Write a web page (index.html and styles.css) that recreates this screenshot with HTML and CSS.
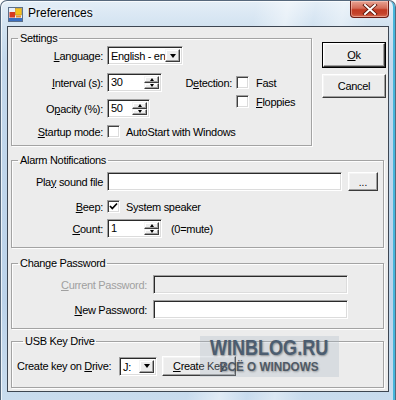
FILE: index.html
```html
<!DOCTYPE html>
<html>
<head>
<meta charset="utf-8">
<title>Preferences</title>
<link rel="stylesheet" href="styles.css">
</head>
<body>
<div class="window">
  <div class="titlebar">
    <svg class="appicon" width="15" height="15" viewBox="0 0 15 15">
      <rect x="0.5" y="0.5" width="14" height="14" fill="#e8eef6" stroke="#5b6f8a"/>
      <rect x="1" y="11" width="13" height="3" fill="#3b6fc0"/>
      <rect x="1.5" y="5" width="5.5" height="5.5" fill="#d63a20"/>
      <rect x="7.5" y="1.5" width="6" height="6.5" fill="#f3c21c" stroke="#c08a10" stroke-width="0.6"/>
      <rect x="8" y="8.5" width="5" height="2" fill="#e8902c"/>
    </svg>
    <span class="title">Preferences</span>
    <div class="close">
      <svg width="16" height="11" viewBox="0 0 16 11">
        <path d="M3 1 L13 10 M13 1 L3 10" fill="none" stroke="#5a1408" stroke-width="3.6" stroke-linecap="square"/>
        <path d="M3 1 L13 10 M13 1 L3 10" fill="none" stroke="#ffffff" stroke-width="2" stroke-linecap="square"/>
      </svg>
    </div>
  </div>

  <div class="client">
    <div class="toprow">
      <fieldset class="group g-settings">
        <legend>Settings</legend>
        <div class="row r-lang">
          <span class="lbl"><u>L</u>anguage:</span>
          <div class="box combo c-lang"><span class="val">English - en</span><span class="drop"><i class="tri"></i></span></div>
        </div>
        <div class="row r-int">
          <span class="lbl"><u>I</u>nterval (s):</span>
          <div class="box spin s-int"><span class="val">30</span><span class="arrows"><span class="sb"><i class="tu"></i></span><span class="sb"><i class="td"></i></span></span></div>
          <span class="det-lbl">D<u>e</u>tection:</span>
          <div class="det">
            <div class="chk-row"><span class="chk"></span><span>Fast</span></div>
            <div class="chk-row"><span class="chk"></span><span><u>F</u>loppies</span></div>
          </div>
        </div>
        <div class="row r-op">
          <span class="lbl">O<u>p</u>acity (%):</span>
          <div class="box spin s-op"><span class="val">50</span><span class="arrows"><span class="sb"><i class="tu"></i></span><span class="sb"><i class="td"></i></span></span></div>
        </div>
        <div class="row r-start">
          <span class="lbl"><u>S</u>tartup mode:</span>
          <div class="chk-row"><span class="chk"></span><span>AutoStart with Windows</span></div>
        </div>
      </fieldset>
      <div class="buttons">
        <div class="btn-default"><div class="btn b-ok"><u>O</u>k</div></div>
        <div class="btn b-cancel">Cancel</div>
      </div>
    </div>

    <fieldset class="group g-alarm">
      <legend>Alarm Notifications</legend>
      <div class="row r-sound">
        <span class="lbl">Pla<u>y</u> sound file</span>
        <div class="box tb tb-sound"></div>
        <div class="btn b-browse">...</div>
      </div>
      <div class="row r-beep">
        <span class="lbl"><u>B</u>eep:</span>
        <div class="chk-row"><span class="chk checked"><svg width="9" height="9" viewBox="0 0 9 9"><path d="M1 4 L3.3 6.5 L8 1.5" fill="none" stroke="#000" stroke-width="1.7"/></svg></span><span>System speaker</span></div>
      </div>
      <div class="row r-count">
        <span class="lbl"><u>C</u>ount:</span>
        <div class="box spin s-count"><span class="val">1</span><span class="arrows"><span class="sb"><i class="tu"></i></span><span class="sb"><i class="td"></i></span></span></div>
        <span class="note">(0=mute)</span>
      </div>
    </fieldset>

    <fieldset class="group g-pass">
      <legend>Change Password</legend>
      <div class="row r-cur">
        <span class="lbl2 disabled"><u>C</u>urrent Password:</span>
        <div class="box tb tb-pass tb-disabled"></div>
      </div>
      <div class="row r-new">
        <span class="lbl2"><u>N</u>ew Password:</span>
        <div class="box tb tb-pass"></div>
      </div>
    </fieldset>

    <fieldset class="group g-usb">
      <legend>USB Key Drive</legend>
      <div class="row r-usb">
        <span class="lbl3">Create key on <u>D</u>rive:</span>
        <div class="box combo c-drive"><span class="val">J:</span><span class="drop"><i class="tri"></i></span></div>
        <div class="btn b-create"><u>C</u>reate Key</div>
      </div>
    </fieldset>
  </div>

  <div class="watermark">
    <div class="wm1">WINBLOG.RU</div>
    <div class="wm2">ВСЁ О WINDOWS</div>
  </div>
</div>
</body>
</html>
```

FILE: styles.css
```css
* { box-sizing: border-box; }
html, body { margin: 0; padding: 0; }
body {
  width: 396px;
  height: 400px;
  overflow: hidden;
  background: #ffffff;
  font-family: "Liberation Sans", Arial, sans-serif;
  font-size: 11px;
  color: #000;
}
u { text-decoration: underline; text-underline-offset: 1px; }

.window {
  position: relative;
  width: 396px;
  height: 400px;
  border: 1px solid #56687c;
  border-bottom: none;
  border-radius: 7px 7px 0 0;
  padding: 0 6px 8px 6px;
  display: flex;
  flex-direction: column;
  background:
    linear-gradient(100deg, rgba(255,255,255,0) 55%, rgba(255,255,255,0.45) 62%, rgba(255,255,255,0) 68%, rgba(255,255,255,0.35) 74%, rgba(255,255,255,0) 80%),
    linear-gradient(180deg, #e4eef7 0px, #d3e3f1 24px, #c3d8ec 60px, #bcd3ea 300px, #c9dcee 400px);
  box-shadow: inset -4px 0 0 -2px #46b6dc, inset 1px 1px 0 rgba(255,255,255,0.7);
}

.titlebar {
  height: 25px;
  display: flex;
  align-items: flex-start;
  flex: none;
}
.appicon { margin: 6px 0 0 1px; flex: none; }
.title {
  margin: 5px 0 0 5px;
  font-size: 12px;
  line-height: 15px;
  color: #000;
  text-shadow: 0 0 4px rgba(255,255,255,0.95), 0 0 8px rgba(255,255,255,0.8);
}
.close {
  margin-left: auto;
  width: 39px;
  height: 17px;
  border: 1px solid #6b1c14;
  border-top: none;
  border-radius: 0 0 4px 4px;
  background: linear-gradient(180deg, #e8a494 0%, #d46c58 45%, #c23a22 55%, #c4442c 80%, #d66a50 100%);
  box-shadow: inset 0 0 0 1px rgba(255,220,210,0.45);
  display: flex;
  align-items: center;
  justify-content: center;
}

.client {
  flex: 1;
  background: #ececec;
  border: 1px solid #3d4652;
  padding: 5px 0 0 3px;
  display: flex;
  flex-direction: column;
  letter-spacing: -0.3px;
}

.toprow { display: flex; align-items: flex-start; }

.group {
  margin: 0;
  padding: 0;
  min-width: 0;
  border: 1px solid #a3a3a3;
  box-shadow: inset 1px 1px 0 #fdfdfd, 1px 1px 0 #fdfdfd;
}
.group legend {
  margin-left: 6px;
  padding: 0 2px;
  line-height: 13px;
  font-size: 11px;
}

.g-settings { width: 301px; padding-bottom: 7px; }
.g-alarm { width: 373px; margin-top: 8px; padding-bottom: 9px; }
.g-pass { width: 373px; margin-top: 9px; padding-bottom: 9px; }
.g-usb { width: 373px; margin-top: 6px; padding-bottom: 11px; padding-left: 5px; }

.row { display: flex; align-items: center; }
.lbl { width: 91px; margin-right: 4px; text-align: right; flex: none; white-space: nowrap; }
.lbl2 { width: 135px; margin-right: 6px; text-align: right; flex: none; white-space: nowrap; }
.lbl3 { width: 102px; flex: none; white-space: nowrap; }
.disabled { color: #a0a0a0; }

.r-lang { margin-top: 1px; height: 19px; }
.r-int { margin-top: 8px; height: 19px; }
.r-op { margin-top: 7px; height: 19px; }
.r-start { margin-top: 7px; height: 13px; }

.r-sound { margin-top: 5px; height: 19px; }
.r-beep { margin-top: 9px; height: 13px; }
.r-count { margin-top: 6px; height: 19px; }

.r-cur { margin-top: 5px; height: 19px; }
.r-new { margin-top: 6px; height: 19px; }

.r-usb { margin-top: 8px; height: 20px; }

/* sunken boxes */
.box {
  height: 19px;
  background: #fff;
  border: 1px solid;
  border-color: #a0a0a0 #ffffff #ffffff #a0a0a0;
  box-shadow: inset 1px 1px 0 #2a2a2a, inset -1px -1px 0 #dcdcdc;
  flex: none;
  display: flex;
  align-items: stretch;
}
.val { flex: 1; padding: 0 0 0 3px; line-height: 17px; white-space: nowrap; overflow: hidden; }

.combo .val { padding-top: 1px; }
.drop, .sb {
  background: #ececec;
  border: 1px solid;
  border-color: #f4f4f4 #3a3a3a #3a3a3a #f4f4f4;
  box-shadow: inset -1px -1px 0 #a0a0a0, inset 1px 1px 0 #ffffff;
  display: flex;
  align-items: center;
  justify-content: center;
}
.drop { width: 15px; margin: 2px 2px 2px 0; flex: none; }
.tri {
  width: 0; height: 0;
  border-left: 3.5px solid transparent;
  border-right: 3.5px solid transparent;
  border-top: 4px solid #000;
}
.arrows { width: 15px; margin: 2px 2px 2px 0; display: flex; flex-direction: column; flex: none; }
.sb { flex: 1; }
.tu, .td { width: 0; height: 0; border-left: 2.5px solid transparent; border-right: 2.5px solid transparent; }
.tu { border-bottom: 3px solid #000; }
.td { border-top: 3px solid #000; }

.c-lang { width: 76px; }
.s-int { width: 55px; }
.s-op { width: 43px; }
.s-count { width: 55px; }
.c-drive { width: 38px; height: 19px; }

.tb-sound { width: 235px; }
.tb-pass { width: 195px; }
.tb-disabled { background: #ececec; }

.det-lbl { width: 47px; margin-left: 23px; text-align: right; flex: none; }
.det { align-self: flex-start; margin: 3px 0 0 4px; display: flex; flex-direction: column; gap: 6px; }
.chk-row { display: flex; align-items: center; height: 13px; gap: 7px; white-space: nowrap; }
.r-start .chk-row, .r-beep .chk-row { gap: 6px; }
.chk {
  width: 13px; height: 13px; flex: none;
  background: #fff;
  border: 1px solid;
  border-color: #a0a0a0 #ffffff #ffffff #a0a0a0;
  box-shadow: inset 1px 1px 0 #404040, inset -1px -1px 0 #dcdcdc;
  display: flex; align-items: center; justify-content: center;
}

.note { margin-left: 9px; }

/* buttons */
.btn {
  background: #ececec;
  border: 1px solid;
  border-color: #ffffff #3a3a3a #3a3a3a #ffffff;
  box-shadow: inset -1px -1px 0 #a0a0a0, inset 1px 1px 0 #f4f4f4;
  display: flex; align-items: center; justify-content: center;
  flex: none;
  white-space: nowrap;
}
.buttons { margin: 10px 0 0 10px; display: flex; flex-direction: column; gap: 6px; width: 64px; }
.btn-default { border: 1px solid #000; height: 26px; display: flex; }
.btn-default .btn { flex: 1; height: 24px; }
.b-cancel { height: 24px; width: 64px; }
.b-browse { width: 30px; height: 19px; margin-left: 6px; font-size: 10px; padding-top: 2px; letter-spacing: 0; }
.b-create { width: 74px; height: 20px; margin-left: 5px; }

/* watermark overlay */
.watermark {
  position: absolute;
  left: 199px;
  top: 335px;
  width: 139px;
  height: 41px;
  background: rgba(170, 182, 196, 0.30);
  display: flex;
  flex-direction: column;
  align-items: center;
}
.wm1 {
  font-weight: bold;
  font-size: 22px;
  line-height: 20px;
  margin-top: 2px;
  color: #4c5d70;
  transform: scaleX(0.82);
  text-shadow: 1px 1px 2px rgba(0,0,0,0.35);
}
.wm2 {
  font-weight: bold;
  font-size: 13px;
  line-height: 14px;
  margin-top: 2px;
  color: #4f5a66;
  transform: scaleX(0.9);
  text-shadow: 1px 1px 2px rgba(0,0,0,0.3);
}
```
